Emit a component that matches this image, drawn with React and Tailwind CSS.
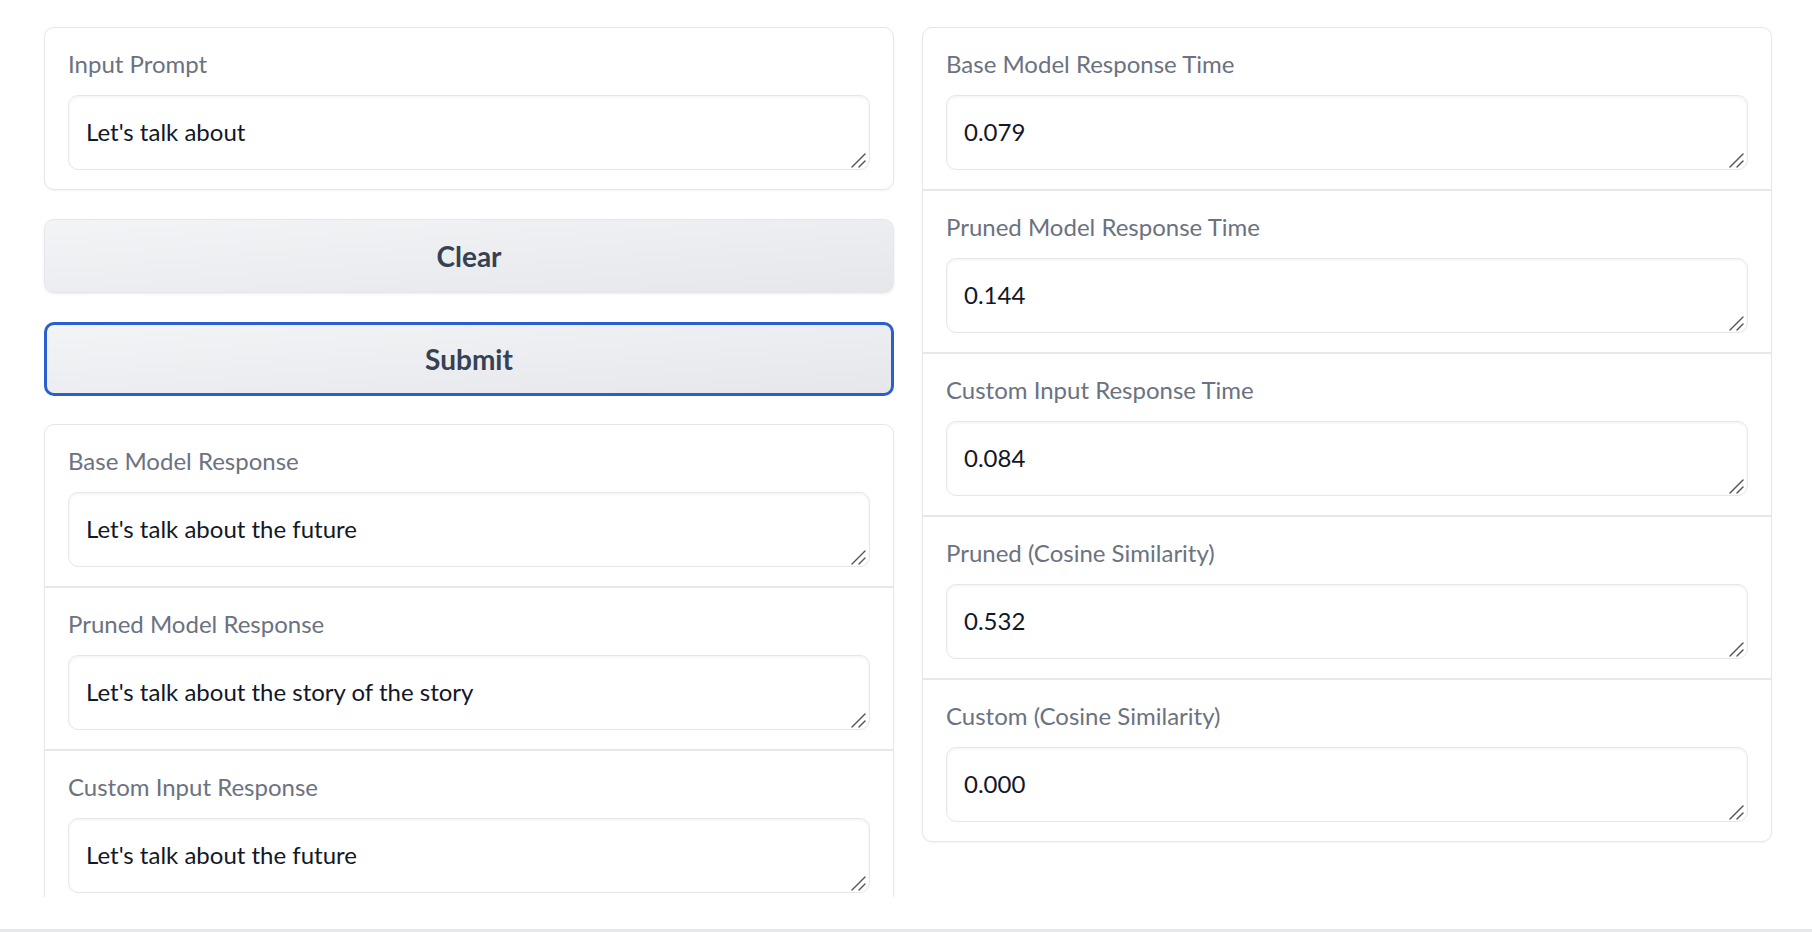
import React from "react";

function Field({ label, value }) {
  return (
    <div className="px-[23px] pt-[24px] pb-[19px]">
      <div className="text-[24px] leading-[24px] text-[#6b7280] mb-[19px] whitespace-nowrap">{label}</div>
      <div className="relative">
        <textarea
          readOnly
          defaultValue={value}
          className="block w-full h-[75px] rounded-[10px] border border-[#e5e7eb] bg-white shadow-[inset_0_1px_3px_rgba(0,0,0,0.06)] px-[17px] pt-[21px] pb-0 text-[24px] leading-[30px] text-[#111827] outline-none resize-none overflow-hidden"
        />
        <svg
          className="absolute right-[4px] bottom-[2px] pointer-events-none"
          width="15"
          height="15"
          viewBox="0 0 15 15"
        >
          <line x1="1" y1="14" x2="14" y2="1" stroke="#555" strokeWidth="1.4" strokeLinecap="round" />
          <line x1="8" y1="14" x2="14" y2="8" stroke="#555" strokeWidth="1.4" strokeLinecap="round" />
        </svg>
      </div>
    </div>
  );
}

function Card({ children }) {
  return (
    <div className="rounded-[10px] border border-[#e5e7eb] bg-white shadow-[0_1px_2px_rgba(0,0,0,0.05)] overflow-hidden divide-y-2 divide-[#e5e7eb]">
      {children}
    </div>
  );
}

export default function App() {
  return (
    <div
      className="w-[1812px] h-[932px] bg-white flex flex-col overflow-hidden"
      style={{ fontFamily: "Lato, 'Liberation Sans', sans-serif" }}
    >
      <div className="h-[897px] overflow-hidden pt-[27px] pl-[44px] pr-[40px] shrink-0">
        <div className="grid grid-cols-2 gap-[28px] items-start">
          <div className="flex flex-col">
            <Card>
              <Field label="Input Prompt" value="Let's talk about" />
            </Card>
            <button className="mt-[29px] h-[74px] w-full rounded-[10px] border border-[#e5e7eb] bg-linear-to-br from-[#f3f4f6] to-[#e5e7eb] text-[28px] font-bold text-[#374151] shadow-[0_1px_3px_rgba(0,0,0,0.08)]">
              Clear
            </button>
            <button className="mt-[29px] h-[74px] w-full rounded-[10px] border-[3px] border-[#2b5fcf] bg-linear-to-br from-[#f3f4f6] to-[#e5e7eb] text-[28px] font-bold text-[#374151]">
              Submit
            </button>
            <div className="mt-[28px]">
              <Card>
                <Field label="Base Model Response" value="Let's talk about the future" />
                <Field label="Pruned Model Response" value="Let's talk about the story of the story" />
                <Field label="Custom Input Response" value="Let's talk about the future" />
              </Card>
            </div>
          </div>
          <div>
            <Card>
              <Field label="Base Model Response Time" value="0.079" />
              <Field label="Pruned Model Response Time" value="0.144" />
              <Field label="Custom Input Response Time" value="0.084" />
              <Field label="Pruned (Cosine Similarity)" value="0.532" />
              <Field label="Custom (Cosine Similarity)" value="0.000" />
            </Card>
          </div>
        </div>
      </div>
      <div className="h-[32px] shrink-0" />
      <div className="h-[3px] bg-[#e5e7eb] shrink-0" />
    </div>
  );
}
